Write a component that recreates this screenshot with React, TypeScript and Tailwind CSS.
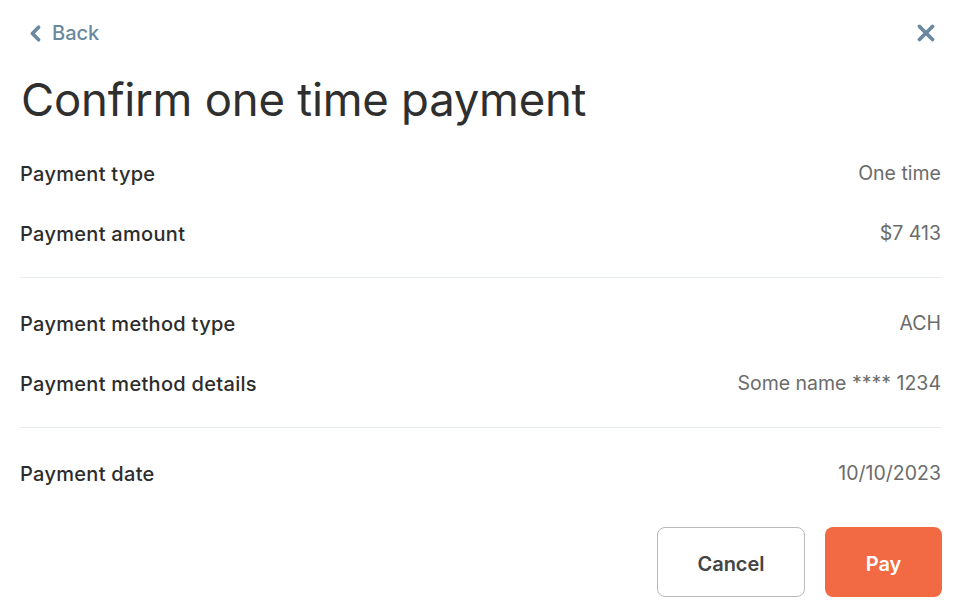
import React from 'react'
import { ChevronLeft, X } from 'lucide-react'

type Row = { label: string; value: string }

const groups: Row[][] = [
  [
    { label: 'Payment type', value: 'One time' },
    { label: 'Payment amount', value: '$7 413' }
  ],
  [
    { label: 'Payment method type', value: 'ACH' },
    { label: 'Payment method details', value: 'Some name **** 1234' }
  ],
  [{ label: 'Payment date', value: '10/10/2023' }]
]

export default function App() {
  return (
    <div
      className="min-h-screen w-full bg-white pl-5 pr-[22px] text-[#333]"
      style={{ fontFamily: 'Inter, "Noto Sans", sans-serif' }}
    >
      <div className="flex h-[66px] items-center justify-between">
        <button
          type="button"
          className="flex items-center gap-[4px] pl-[3px] text-[20px] font-medium text-[#6a899e]"
        >
          <ChevronLeft className="h-[25px] w-[25px]" strokeWidth={3.5} />
          Back
        </button>
        <button type="button" className="mr-[2px] text-[#6a899e]" aria-label="Close">
          <X className="h-[26px] w-[26px]" strokeWidth={3.5} />
        </button>
      </div>

      <h1 className="flex h-[68px] items-center pl-[1px] text-[45.5px] font-normal tracking-[-0.25px] text-[#2f2f2f]">
        Confirm one time payment
      </h1>

      <div className="mt-[10px]">
        {groups.map((rows, gi) => (
          <div key={gi}>
            {gi > 0 ? <div className="mb-[16px] mt-[13px] h-px bg-[#e7ecee]" /> : null}
            {rows.map((r) => (
              <div key={r.label} className="flex h-[60px] items-center justify-between">
                <span className="text-[20px] font-medium tracking-[0.3px] text-[#2c2c2c]">
                  {r.label}
                </span>
                <span className="text-[19.5px] font-normal text-[#6b6b6b]">{r.value}</span>
              </div>
            ))}
          </div>
        ))}
      </div>

      <div className="mt-[23px] flex justify-end gap-5">
        <button
          type="button"
          className="h-[70px] w-[148px] rounded-lg border border-[#b9b9b9] bg-white pt-[3px] text-[20px] font-semibold text-[#444]"
        >
          Cancel
        </button>
        <button
          type="button"
          className="-mr-px h-[70px] w-[117px] rounded-lg bg-[#f26a43] pt-[3px] text-[20px] font-semibold text-white"
        >
          Pay
        </button>
      </div>
    </div>
  )
}
